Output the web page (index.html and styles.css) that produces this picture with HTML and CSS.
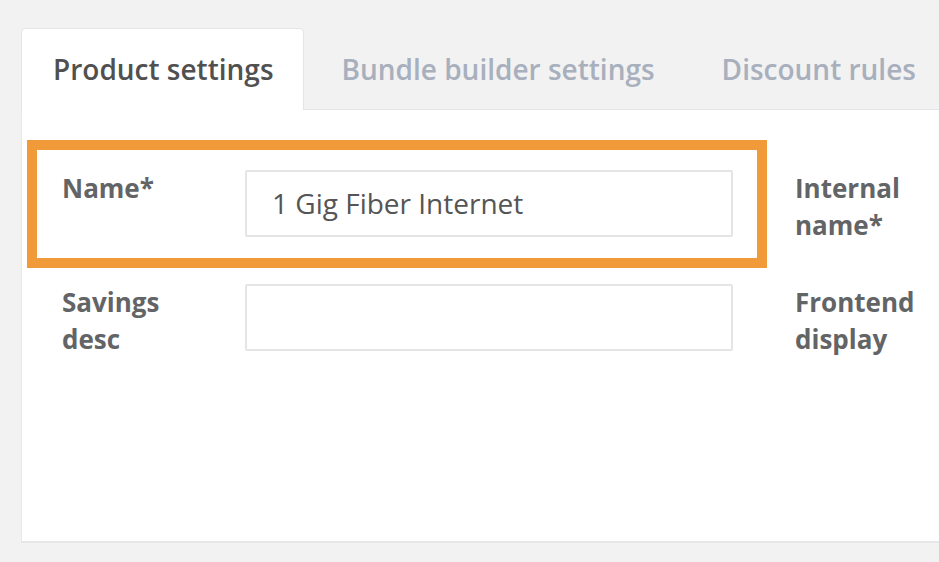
FILE: index.html
```html
<!DOCTYPE html>
<html>
<head>
<meta charset="utf-8">
<link rel="stylesheet" href="styles.css">
</head>
<body>
<div class="page">
  <div class="tabs">
    <div class="tab active">Product settings</div>
    <div class="tab">Bundle builder settings</div>
    <div class="tab">Discount rules</div>
  </div>
  <div class="panel">
    <div class="row">
      <span class="highlight"></span>
      <label class="label">Name*</label>
      <div class="input">1 Gig Fiber Internet</div>
      <label class="label right">Internal<br>name*</label>
    </div>
    <div class="row">
      <label class="label">Savings<br>desc</label>
      <div class="input"></div>
      <label class="label right">Frontend<br>display</label>
    </div>
  </div>
</div>
</body>
</html>
```
FILE: styles.css
```css
html, body {
  margin: 0;
  padding: 0;
  background: #f2f2f2;
  overflow: hidden;
}
body {
  width: 939px;
  height: 562px;
  font-family: "Open Sans", "Liberation Sans", sans-serif;
}
.page {
  padding: 28px 0 0 21px;
  overflow: hidden;
}
.tabs {
  display: flex;
  height: 82px;
  border-bottom: 1px solid #e3e5e8;
  box-sizing: border-box;
}
.tab {
  font-size: 28px;
  font-weight: 600;
  color: #a8afbd;
  padding: 0 29px 0 38px;
  line-height: 82px;
  white-space: nowrap;
}
.tab:last-child {
  padding-right: 0;
}
.tab.active {
  background: #fff;
  color: #505050;
  border: 1px solid #e3e5e8;
  border-bottom: none;
  border-radius: 5px 5px 0 0;
  padding: 0 29px 0 31px;
  margin-bottom: -1px;
  line-height: 81px;
}
.panel {
  background: #fff;
  border-left: 1px solid #e6e7e9;
  border-bottom: 2px solid #e6e7e9;
  height: 433px;
  box-sizing: border-box;
  padding: 60px 0 0 40px;
  display: flex;
  flex-direction: column;
  gap: 40px;
}
.row {
  position: relative;
  display: flex;
  align-items: flex-start;
}
.label {
  width: 183px;
  flex: none;
  font-size: 26px;
  font-weight: 700;
  color: #636466;
  line-height: 37px;
}
.label.right {
  margin-left: 62px;
  width: 200px;
}
.input {
  width: 488px;
  height: 67px;
  flex: none;
  box-sizing: border-box;
  border: 2px solid #e5e5e5;
  border-radius: 2px;
  font-size: 28px;
  color: #555;
  padding-left: 25px;
  line-height: 63px;
}
.highlight {
  position: absolute;
  left: -35px;
  top: -30px;
  width: 740px;
  height: 128px;
  box-sizing: border-box;
  border: 10px solid #f09a3a;
  pointer-events: none;
}
```
